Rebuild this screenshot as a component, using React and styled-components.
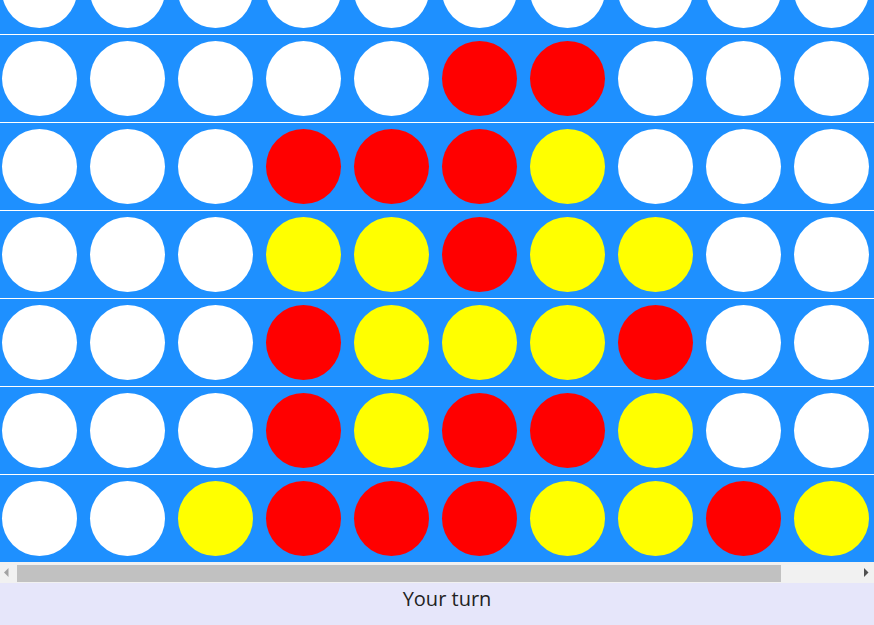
import React from "react";
import styled, { createGlobalStyle } from "styled-components";

const GlobalStyle = createGlobalStyle`
  html, body {
    margin: 0;
    padding: 0;
    height: 100%;
    overflow: hidden;
  }
  #root {
    height: 100%;
  }
`;

const Page = styled.div`
  display: flex;
  flex-direction: column;
  height: 625px;
`;

const Board = styled.div`
  flex: 1 1 auto;
  min-height: 0;
  display: flex;
  flex-direction: column-reverse;
  align-items: flex-start;
  overflow: hidden;
  background: #ffffff;
`;

const Row = styled.div`
  flex: 0 0 auto;
  display: flex;
  gap: 13px;
  width: max-content;
  height: 87px;
  padding: 0 7px 0 2px;
  align-items: center;
  background: #1e90ff;
  border-top: ${(p) => (p.$top ? "none" : "1px solid #ffffff")};
`;

const COLORS = { W: "#ffffff", R: "#ff0000", Y: "#ffff00" };

const Disc = styled.div`
  width: 75px;
  height: 75px;
  border-radius: 50%;
  background: ${(p) => COLORS[p.$c]};
  flex: 0 0 auto;
`;

const ScrollBar = styled.div`
  flex: 0 0 21px;
  display: flex;
  align-items: stretch;
  background: #f1f1f1;
`;

const ScrollButton = styled.div`
  flex: 0 0 16px;
  display: block;
  svg {
    display: block;
  }
`;

const Track = styled.div`
  flex: 1 1 auto;
  display: flex;
  align-items: flex-start;
  padding: 3px 1px 0;
`;

const Thumb = styled.div`
  width: ${(p) => p.$width}px;
  height: 17px;
  background: #c1c1c1;
`;

const Footer = styled.div`
  flex: 0 0 42px;
  box-sizing: border-box;
  padding: 2px 0 0 20px;
  background: #e6e6fa;
  color: #222222;
  text-align: center;
  font-family: "Open Sans", "Noto Sans", sans-serif;
  font-size: 20px;
  line-height: 28px;
`;

const rows = [
  "WWWWWWWWWWW",
  "WWWWWRRWWWW",
  "WWWRRRYWWWW",
  "WWWYYRYYWWW",
  "WWWRYYYRWWW",
  "WWWRYRRYWWW",
  "WWYRRRYYRYW",
];

const Arrow = ({ points, color }) => (
  <svg width="16" height="21" viewBox="0 0 16 21">
    <polygon points={points} fill={color} />
  </svg>
);

export default function App() {
  const bottomUp = [...rows].reverse();
  return (
    <>
      <GlobalStyle />
      <Page>
        <Board>
          {bottomUp.map((r, i) => (
            <Row key={i} $top={i === bottomUp.length - 1}>
              {r.split("").map((c, j) => (
                <Disc key={j} $c={c} />
              ))}
            </Row>
          ))}
        </Board>
        <ScrollBar>
          <ScrollButton>
            <Arrow points="8.5,6 4,10.5 8.5,15" color="#a3a3a3" />
          </ScrollButton>
          <Track>
            <Thumb $width={764} />
          </Track>
          <ScrollButton>
            <Arrow points="6,6 10.5,10.5 6,15" color="#505050" />
          </ScrollButton>
        </ScrollBar>
        <Footer>Your turn</Footer>
      </Page>
    </>
  );
}
